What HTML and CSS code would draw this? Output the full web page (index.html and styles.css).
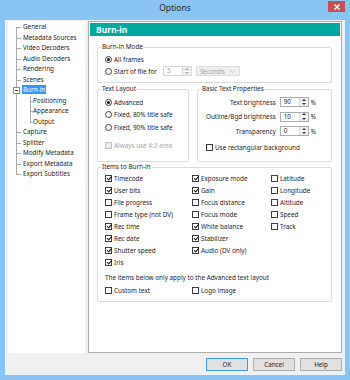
FILE: index.html
```html
<!DOCTYPE html>
<html lang="en">
<head>
    <meta charset="UTF-8">
    <title>Options</title>
    <link rel="stylesheet" href="styles.css">
</head>
<body>
    <div class="window">
        <div class="titlebar">
            <span class="title">Options</span>
            <div class="close-btn">
                <svg width="6" height="6" viewBox="0 0 6 6"><path d="M0.5 0.5L5.5 5.5M5.5 0.5L0.5 5.5" stroke="#fff" stroke-width="1.4"/></svg>
            </div>
        </div>

        <div class="client">
            <div class="main">
                <!-- Page tree -->
                <ul class="tree">
                    <li><span class="node">General</span></li>
                    <li><span class="node">Metadata Sources</span></li>
                    <li><span class="node">Video Decoders</span></li>
                    <li><span class="node">Audio Decoders</span></li>
                    <li><span class="node">Rendering</span></li>
                    <li><span class="node">Scenes</span></li>
                    <li class="open">
                        <span class="toggle"></span>
                        <span class="node selected">Burn-in</span>
                        <ul class="sub">
                            <li><span class="node">Positioning</span></li>
                            <li><span class="node">Appearance</span></li>
                            <li><span class="node">Output</span></li>
                        </ul>
                    </li>
                    <li><span class="node">Capture</span></li>
                    <li><span class="node">Splitter</span></li>
                    <li><span class="node">Modify Metadata</span></li>
                    <li><span class="node">Export Metadata</span></li>
                    <li><span class="node">Export Subtitles</span></li>
                </ul>

                <!-- Settings page -->
                <div class="page">
                    <div class="page-title">Burn-in</div>
                    <div class="page-body">
                        <fieldset class="group mode">
                            <legend>Burn-in Mode</legend>
                            <div class="opt"><span class="radio checked"></span>All frames</div>
                            <div class="opt">
                                <span class="radio"></span>Start of file for
                                <div class="spin disabled start-spin">
                                    <span class="spin-val">5</span>
                                    <span class="spin-arrows"><i class="up"></i><i class="down"></i></span>
                                </div>
                                <div class="combo disabled">
                                    <span>Seconds</span>
                                    <svg width="5" height="3" viewBox="0 0 5 3"><path d="M0.3 0.3L2.5 2.5L4.7 0.3" fill="none" stroke="#b5b5b5" stroke-width="0.8"/></svg>
                                </div>
                            </div>
                        </fieldset>

                        <div class="group-row">
                            <fieldset class="group layout">
                                <legend>Text Layout</legend>
                                <div class="opt"><span class="radio checked"></span>Advanced</div>
                                <div class="opt"><span class="radio"></span>Fixed, 80% title safe</div>
                                <div class="opt"><span class="radio"></span>Fixed, 90% title safe</div>
                                <div class="opt disabled area"><span class="cb"></span>Always use 4:3 area</div>
                            </fieldset>

                            <fieldset class="group props">
                                <legend>Basic Text Properties</legend>
                                <div class="prop">
                                    <span>Text brightness</span>
                                    <div class="spin"><span class="spin-val">90</span><span class="spin-arrows"><i class="up"></i><i class="down"></i></span></div>
                                    <span class="pct">%</span>
                                </div>
                                <div class="prop">
                                    <span>Outline/Bgd brightness</span>
                                    <div class="spin"><span class="spin-val">10</span><span class="spin-arrows"><i class="up"></i><i class="down"></i></span></div>
                                    <span class="pct">%</span>
                                </div>
                                <div class="prop">
                                    <span>Transparency</span>
                                    <div class="spin"><span class="spin-val">0</span><span class="spin-arrows"><i class="up"></i><i class="down"></i></span></div>
                                    <span class="pct">%</span>
                                </div>
                                <div class="opt rect-bg"><span class="cb"></span>Use rectangular background</div>
                            </fieldset>
                        </div>

                        <fieldset class="group items">
                            <legend>Items to Burn-in</legend>
                            <div class="cols">
                                <div class="col col-1">
                                    <div class="opt"><span class="cb checked"></span>Timecode</div>
                                    <div class="opt"><span class="cb checked"></span>User bits</div>
                                    <div class="opt"><span class="cb"></span>File progress</div>
                                    <div class="opt"><span class="cb"></span>Frame type (not DV)</div>
                                    <div class="opt"><span class="cb checked"></span>Rec time</div>
                                    <div class="opt"><span class="cb checked"></span>Rec date</div>
                                    <div class="opt"><span class="cb checked"></span>Shutter speed</div>
                                    <div class="opt"><span class="cb checked"></span>Iris</div>
                                </div>
                                <div class="col col-2">
                                    <div class="opt"><span class="cb checked"></span>Exposure mode</div>
                                    <div class="opt"><span class="cb checked"></span>Gain</div>
                                    <div class="opt"><span class="cb"></span>Focus distance</div>
                                    <div class="opt"><span class="cb"></span>Focus mode</div>
                                    <div class="opt"><span class="cb checked"></span>White balance</div>
                                    <div class="opt"><span class="cb checked"></span>Stabilizer</div>
                                    <div class="opt"><span class="cb checked"></span>Audio (DV only)</div>
                                </div>
                                <div class="col col-3">
                                    <div class="opt"><span class="cb"></span>Latitude</div>
                                    <div class="opt"><span class="cb"></span>Longitude</div>
                                    <div class="opt"><span class="cb"></span>Altitude</div>
                                    <div class="opt"><span class="cb"></span>Speed</div>
                                    <div class="opt"><span class="cb"></span>Track</div>
                                </div>
                            </div>
                            <div class="note">The items below only apply to the Advanced text layout</div>
                            <div class="cols">
                                <div class="col col-1">
                                    <div class="opt"><span class="cb"></span>Custom text</div>
                                </div>
                                <div class="col col-2">
                                    <div class="opt"><span class="cb"></span>Logo image</div>
                                </div>
                            </div>
                        </fieldset>
                    </div>
                </div>
            </div>

            <div class="buttons">
                <button class="btn default">OK</button>
                <button class="btn">Cancel</button>
                <button class="btn">Help</button>
            </div>
        </div>
    </div>
</body>
</html>
```

FILE: styles.css
```css
/* Base */
* {
    margin: 0;
    padding: 0;
    box-sizing: border-box;
}

body {
    font-family: "Noto Sans", "Open Sans", sans-serif;
    font-size: 6.35px;
    color: #1e1e1e;
    background: #fff;
}

/* Window frame */
.window {
    width: 350px;
    height: 380px;
    background: #8ac4f2;
    display: flex;
    flex-direction: column;
}

.titlebar {
    height: 20px;
    position: relative;
    text-align: center;
    padding-top: 2px;
}

.title {
    font-size: 8.5px;
    line-height: 12px;
    color: #2a2a2a;
}

.close-btn {
    position: absolute;
    top: 1px;
    right: 5px;
    width: 17px;
    height: 11px;
    background: #c75050;
    display: flex;
    align-items: center;
    justify-content: center;
}

.client {
    flex: 1;
    margin: 0 5px 5px;
    background: #f0f0f0;
    padding: 1px 3px 4px;
    display: flex;
    flex-direction: column;
}

.main {
    display: flex;
    gap: 3px;
    height: 332px;
}

/* Tree */
.tree {
    width: 83px;
    background: #fff;
    list-style: none;
    padding-top: 1px;
}

.tree li {
    position: relative;
    padding-left: 15px;
    line-height: 10.5px;
}

.tree li::before {
    content: "";
    position: absolute;
    left: 8px;
    top: 0;
    bottom: 0;
    border-left: 1px solid #a9a9a9;
}

.tree > li:first-child::before {
    top: 5px;
}

.tree li:last-child::before {
    bottom: auto;
    height: 5px;
}

.tree > li:first-child:last-child::before {
    height: 0;
}

.tree li::after {
    content: "";
    position: absolute;
    left: 8px;
    top: 5px;
    width: 5px;
    border-top: 1px solid #a9a9a9;
}

.tree .sub {
    list-style: none;
}

.tree .sub li {
    padding-left: 10px;
}

.tree .sub li::before,
.tree .sub li::after {
    left: 7px;
}

.tree .sub li::after {
    width: 3px;
}

.node {
    white-space: nowrap;
    padding: 0 1px;
    margin-left: -1px;
}

.node.selected {
    background: #3399ff;
    color: #fff;
    display: inline-block;
    line-height: 9px;
}

.toggle {
    position: absolute;
    left: 5px;
    top: 2px;
    width: 7px;
    height: 7px;
    border: 1px solid #8f8f8f;
    background: #fff;
    z-index: 1;
}

.toggle::after {
    content: "";
    position: absolute;
    left: 1px;
    top: 2px;
    width: 3px;
    border-top: 1px solid #333;
}

/* Settings page */
.page {
    flex: 1;
    border: 1px solid #adadad;
    background: #fff;
    padding: 1px;
}

.page-title {
    height: 13px;
    line-height: 13px;
    background: #00a99d;
    color: #fff;
    font-weight: bold;
    font-size: 8.5px;
    padding-left: 6px;
}

.page-body {
    padding: 7px 8px 0 7px;
}

/* Group boxes */
.group {
    border: 1px solid #dcdcdc;
    border-radius: 2px;
    padding: 0 6px 0 7px;
    min-width: 0;
}

.group legend {
    line-height: 8px;
    padding: 0 1px;
    margin-left: -4px;
}

.mode {
    padding-top: 2px;
    padding-bottom: 5px;
}

.group-row {
    display: flex;
    gap: 8px;
    margin-top: 2px;
}

.layout {
    width: 92px;
    padding-top: 3px;
}

.props {
    flex: 1;
    padding: 4px 15px 8px 8px;
}

.props legend {
    margin-left: -5px;
}

.items {
    margin-top: 1px;
    padding-top: 1px;
    padding-bottom: 5px;
}

/* Options */
.opt {
    display: flex;
    align-items: center;
    height: 12px;
    white-space: nowrap;
}

.layout .opt {
    height: 12.5px;
}

.layout .area {
    height: 12px;
    margin-top: 6px;
}

.opt.disabled {
    color: #a3a3a3;
}

.radio,
.cb {
    position: relative;
    flex: none;
    width: 7px;
    height: 7px;
    margin-right: 2px;
    border: 1px solid #3d3d3d;
    background: #fff;
}

.radio {
    border-radius: 50%;
}

.radio.checked::after {
    content: "";
    position: absolute;
    left: 1px;
    top: 1px;
    width: 3px;
    height: 3px;
    border-radius: 50%;
    background: #1a1a1a;
}

.cb.checked::after {
    content: "";
    position: absolute;
    left: 1.6px;
    top: -0.2px;
    width: 1.6px;
    height: 3.6px;
    border: solid #1a1a1a;
    border-width: 0 1.2px 1.2px 0;
    transform: rotate(40deg);
}

.disabled .cb {
    border-color: #c3c3c3;
    background: #ececec;
}

/* Spin boxes and combo */
.spin {
    display: flex;
    width: 29px;
    height: 10px;
    border: 1px solid #abadb3;
    background: #fff;
}

.spin-val {
    flex: 1;
    line-height: 8px;
    padding-left: 3px;
}

.spin-arrows {
    width: 9px;
    display: flex;
    flex-direction: column;
    border-left: 1px solid #dadada;
}

.spin-arrows i {
    flex: 1;
    display: flex;
    align-items: center;
    justify-content: center;
    background: #ececec;
}

.spin-arrows i + i {
    border-top: 1px solid #fff;
}

.spin-arrows i::after {
    content: "";
    border-left: 2px solid transparent;
    border-right: 2px solid transparent;
}

.spin-arrows .up::after {
    border-bottom: 2px solid #3a3a3a;
}

.spin-arrows .down::after {
    border-top: 2px solid #3a3a3a;
}

.spin.disabled {
    border-color: #d9d9d9;
    color: #a3a3a3;
}

.spin.disabled .spin-arrows i::after {
    border-bottom-color: #a8a8a8;
    border-top-color: #a8a8a8;
}

.start-spin {
    margin-left: 6px;
}

.combo {
    margin-left: 4px;
    width: 44px;
    height: 10px;
    display: flex;
    align-items: center;
    justify-content: space-between;
    padding: 0 4px 0 3px;
    background: #efefef;
    border: 1px solid #dedede;
    color: #a3a3a3;
}

/* Text properties */
.prop {
    display: flex;
    align-items: center;
    justify-content: flex-end;
    height: 10px;
    white-space: nowrap;
}

.prop + .prop {
    margin-top: 4.5px;
}

.prop .spin {
    margin-left: 4px;
}

.pct {
    margin-left: 2px;
}

.rect-bg {
    margin-top: 5px;
}

/* Items to burn-in */
.cols {
    display: flex;
}

.col-1 {
    width: 87px;
}

.col-2 {
    width: 79px;
}

.note {
    height: 12px;
    line-height: 12px;
    margin-top: 4px;
}

/* Dialog buttons */
.buttons {
    display: flex;
    justify-content: flex-end;
    gap: 5px;
    margin-top: 5px;
}

.btn {
    width: 42px;
    height: 13px;
    font-family: inherit;
    font-size: 6.3px;
    color: #1e1e1e;
    background: #e1e1e1;
    border: 1px solid #adadad;
}

.btn.default {
    border-color: #3c9be8;
}
```
